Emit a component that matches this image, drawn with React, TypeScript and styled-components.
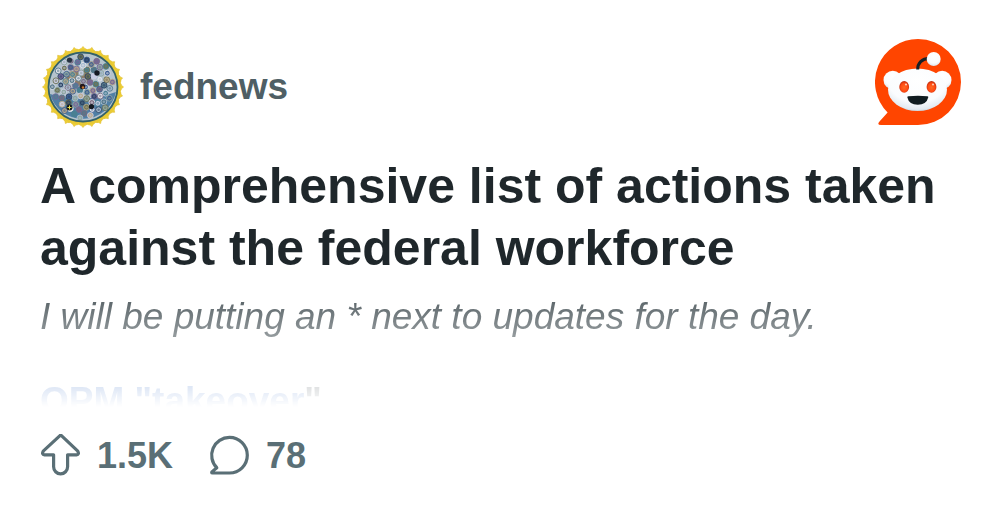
import React from "react";
import styled, { createGlobalStyle } from "styled-components";

const GlobalStyle = createGlobalStyle`
  * { box-sizing: border-box; }
  body {
    margin: 0;
    background: #ffffff;
    font-family: "Liberation Sans", Arial, sans-serif;
  }
`;

const Card = styled.article`
  padding: 39px 39px 32px 40px;
`;

const Header = styled.header`
  display: flex;
  align-items: flex-start;
  justify-content: space-between;
`;

const Community = styled.a`
  display: flex;
  align-items: center;
  gap: 14px;
  padding-top: 5px;
  color: #4f5f65;
  font-size: 37px;
  line-height: 44px;
  font-weight: 700;
  text-decoration: none;
`;

const Emblem = styled.svg`
  display: block;
  width: 86px;
  height: 86px;
`;

const Logo = styled.svg`
  display: block;
  width: 86px;
  height: 86px;
`;

const Title = styled.h1`
  margin: 25px 0 0;
  color: #1f272b;
  font-size: 50px;
  line-height: 62px;
  font-weight: 700;
`;

const Preview = styled.div`
  height: 128px;
  overflow: hidden;
  color: #3c484d;
  font-size: 37px;
  line-height: 48px;
  mask-image: linear-gradient(to bottom, #000 0, transparent 100%);
`;

const Lead = styled.p`
  margin: 14px 0 36px;
  font-style: italic;
`;

const SectionLink = styled.a`
  color: #3068c4;
  font-weight: 700;
  text-decoration: none;
`;

const Section = styled.p`
  margin: 0;
  font-weight: 700;
`;

const Stats = styled.footer`
  display: flex;
  align-items: center;
  gap: 36px;
  margin-top: 27px;
`;

const Stat = styled.span`
  display: flex;
  align-items: center;
  gap: 15px;
  color: #5a6f76;
  font-size: 36px;
  line-height: 44px;
  font-weight: 700;
`;

const StatIcon = styled.svg`
  display: block;
  width: 42px;
  height: 44px;
  fill: none;
  stroke: currentColor;
  stroke-width: 3.2;
  stroke-linejoin: round;
`;

const sealColors = [
  "#3d5f93", "#a9bdd0", "#54778a", "#e2e4ea", "#7a6a80", "#2c4465",
  "#8fa7a0", "#b9a98a", "#4a8093", "#c9cde4", "#6d7353", "#75689a",
];

const seals = Array.from({ length: 76 }, (_, i) => {
  const angle = i * 2.39996;
  const radius = 3.6 * Math.sqrt(i + 0.5);
  return {
    x: 43 + radius * Math.cos(angle),
    y: 43 + radius * Math.sin(angle),
    fill: sealColors[(i * 7 + (i % 5)) % sealColors.length],
    core: sealColors[(i * 5 + 3) % sealColors.length],
  };
});

const petals = Array.from({ length: 28 }, (_, i) => (i * 360) / 28);

function CommunityEmblem() {
  return (
    <Emblem viewBox="0 0 86 86" aria-hidden="true">
      {petals.map((a) => (
        <path
          key={a}
          d="M38.400 7.500Q38.600 4.800 41.500 4.300L43 2.400L44.500 4.300Q47.400 4.800 47.600 7.500Z"
          fill="#efd136"
          stroke="#dcb72a"
          strokeWidth="0.5"
          transform={`rotate(${a} 43 43)`}
        />
      ))}
      <circle cx="43" cy="43" r="38" fill="#e8c934" />
      <circle cx="43" cy="43" r="34.500" fill="#b5c3cc" />
      <path d="M10 50Q43 60 76 48A34 34 0 0 1 10 50Z" fill="#4f7fa5" />
      <path d="M24 32Q38 20 52 32Q50 42 34 42Z" fill="#8d7c66" />
      {seals.map((s, i) => (
        <g key={i}>
          <circle cx={s.x} cy={s.y} r="2.900" fill={s.fill} stroke={s.core} strokeWidth="0.9" />
          <circle cx={s.x} cy={s.y} r="1.300" fill={s.core} opacity="0.55" />
        </g>
      ))}
      <circle cx="57" cy="29" r="2.700" fill="#151923" />
      <circle cx="29.500" cy="63.500" r="3" fill="#14191d" />
      <path d="M29.500 61.500v4M27.500 63.500h4" stroke="#e9e04a" strokeWidth="1" />
      <circle cx="51.500" cy="62.500" r="2.600" fill="#151a22" />
      <circle cx="42.500" cy="42.500" r="2.800" fill="#22191d" />
      <circle cx="43" cy="43.500" r="1.200" fill="#c9772f" />
      <circle cx="29.500" cy="16" r="2.600" fill="#263241" />
      <circle cx="43" cy="43" r="34.500" fill="none" stroke="#33616a" strokeWidth="1.800" />
    </Emblem>
  );
}

function SnooLogo() {
  return (
    <Logo viewBox="0 0 86 86" role="img" aria-label="Reddit">
      <defs>
        <radialGradient id="face" cx="50%" cy="30%" r="75%">
          <stop offset="0" stopColor="#ffffff" />
          <stop offset="0.65" stopColor="#fafcfe" />
          <stop offset="0.88" stopColor="#e2eaf1" />
          <stop offset="1" stopColor="#a9bac8" />
        </radialGradient>
        <radialGradient id="eye" cx="50%" cy="55%" r="55%">
          <stop offset="0" stopColor="#ff6a22" />
          <stop offset="0.65" stopColor="#ff4a12" />
          <stop offset="1" stopColor="#b92a0c" />
        </radialGradient>
      </defs>
      <path
        d="M43 0A43 43 0 1 1 43 86H6Q1.500 86 4.500 82.500L12.600 73.400A43 43 0 0 1 43 0Z"
        fill="#ff4500"
      />
      <circle cx="17.800" cy="41" r="9.300" fill="url(#face)" />
      <circle cx="67.200" cy="41" r="9.300" fill="url(#face)" />
      <ellipse cx="42.500" cy="50.700" rx="29.500" ry="21.300" fill="url(#face)" />
      <path d="M42.700 30.500C42.500 24 47 19.500 54 19.500" fill="none" stroke="#172026" strokeWidth="3" />
      <circle cx="58.700" cy="20" r="7" fill="url(#face)" />
      <ellipse cx="29.200" cy="47.900" rx="4.900" ry="5.800" fill="url(#eye)" />
      <ellipse cx="56.500" cy="47.900" rx="4.900" ry="5.800" fill="url(#eye)" />
      <circle cx="31" cy="45.500" r="1.100" fill="#ffc8ad" />
      <circle cx="58" cy="45.500" r="1.100" fill="#ffc8ad" />
      <path d="M32.300 58.200Q32.300 57.200 33.500 57.200Q43 56.300 52.200 57.200Q53.400 57.200 53.300 58.200Q51.500 65.700 42.800 65.700Q34 65.700 32.300 58.200Z" fill="#101c20" />
    </Logo>
  );
}

export default function App() {
  return (
    <>
      <GlobalStyle />
      <Card>
        <Header>
          <Community href="#fednews">
            <CommunityEmblem />
            fednews
          </Community>
          <SnooLogo />
        </Header>
        <Title>A comprehensive list of actions taken against the federal workforce</Title>
        <Preview>
          <Lead>I will be putting an * next to updates for the day.</Lead>
          <Section>
            <SectionLink href="#opm">OPM "takeover</SectionLink>"
          </Section>
        </Preview>
        <Stats>
          <Stat>
            <StatIcon viewBox="0 2 42 44" role="img" aria-label="Upvotes">
              <path d="M19.700 3.800L3.200 19.200Q1.500 22.500 4.500 22.800H13.600V34.800A7 7 0 0 0 27.600 34.800V22.800H36.500Q39.500 22.500 37.800 19.200L21.700 3.800Q20.700 2.800 19.700 3.800Z" />
            </StatIcon>
            1.5K
          </Stat>
          <Stat>
            <StatIcon viewBox="0 2 42 44" role="img" aria-label="Comments">
              <path d="M20.500 5.400A17.800 17.800 0 1 1 20.500 41H3.500Q2 41 3.200 39.600L7.800 35.700A17.800 17.800 0 0 1 20.500 5.400Z" />
            </StatIcon>
            78
          </Stat>
        </Stats>
      </Card>
    </>
  );
}
